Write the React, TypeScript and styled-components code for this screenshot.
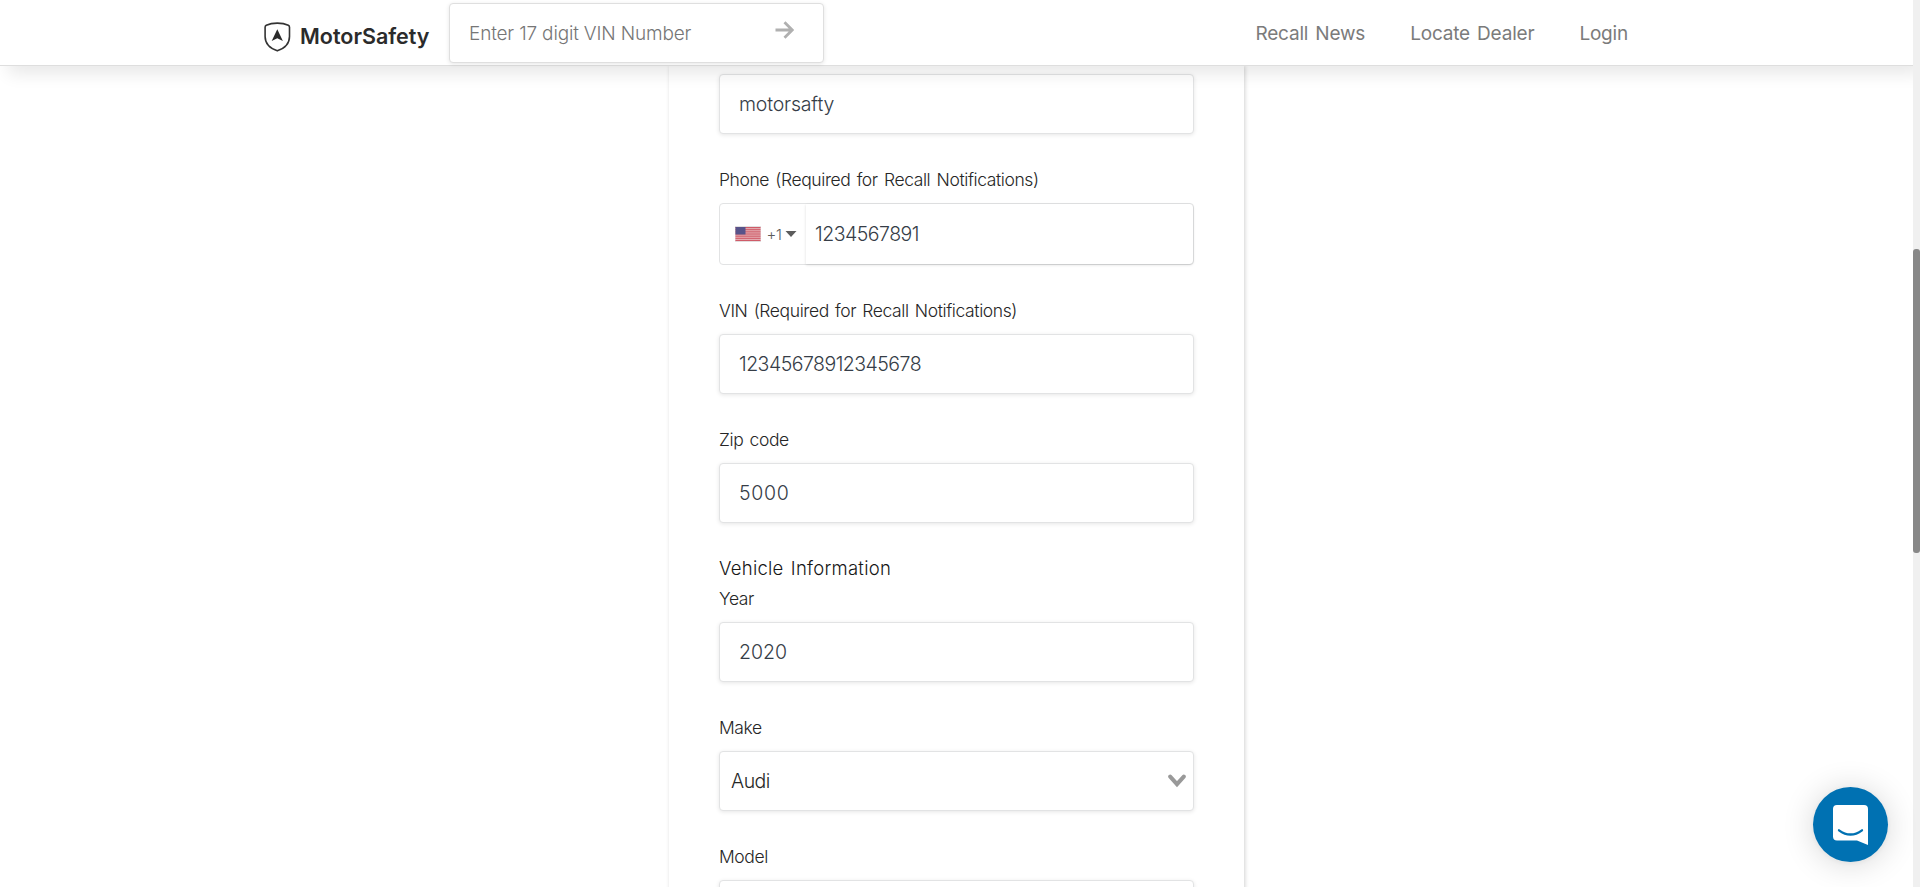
import React from 'react';
import styled, { createGlobalStyle } from 'styled-components';

const GlobalStyle = createGlobalStyle`
  *, *::before, *::after { box-sizing: border-box; }
  body {
    margin: 0;
    background: #fff;
    color: #262626;
    font-family: Inter, 'Liberation Sans', sans-serif;
    font-weight: 300;
  }
`;

const Page = styled.div`
  display: flex;
  height: 887px;
  overflow: hidden;
`;

const Viewport = styled.div`
  flex: 1;
  min-width: 0;
  display: flex;
  flex-direction: column;
`;

const Header = styled.header`
  position: relative;
  z-index: 2;
  flex: none;
  display: flex;
  align-items: flex-start;
  height: 66px;
  padding: 3px 285px 0 264px;
  background: #fff;
  border-bottom: 1px solid #dedede;
  box-shadow: 8px 8px 16px rgba(0, 0, 0, 0.09);
`;

const Brand = styled.a`
  display: flex;
  align-items: center;
  width: 185px;
  height: 68px;
  color: #2b2b2b;
  text-decoration: none;
`;

const BrandName = styled.span`
  margin: 0 0 2px 9px;
  font-size: 21.5px;
  font-weight: 600;
  line-height: 28px;
`;

const SearchBox = styled.div`
  display: flex;
  align-items: center;
  justify-content: space-between;
  width: 375px;
  height: 60px;
  padding: 0 29px 0 19px;
  background: #fff;
  border: 1px solid #dfdfdf;
  border-radius: 4px;
  box-shadow: 0 1px 4px rgba(0, 0, 0, 0.1);
`;

const Placeholder = styled.span`
  color: #767676;
  font-size: 19px;
  letter-spacing: -0.17px;
  white-space: nowrap;
`;

const SearchArrow = styled.svg`
  margin-bottom: 6px;
`;

const Nav = styled.nav`
  display: flex;
  align-items: center;
  gap: 45px;
  height: 60px;
  margin-left: auto;
`;

const NavLink = styled.a`
  color: #7b7b7b;
  font-size: 19px;
  font-weight: 400;
  letter-spacing: -0.2px;
  word-spacing: 2px;
  white-space: nowrap;
`;

const Main = styled.main`
  flex: 1;
  min-height: 0;
  display: flex;
  justify-content: center;
  overflow: hidden;
`;

const Card = styled.form`
  flex: none;
  width: 575px;
  height: 960px;
  padding: 8px 50px 0;
  background: #fff;
  box-shadow: 1px 0 4px rgba(0, 0, 0, 0.18);
`;

const Field = styled.div`
  & + & { margin-top: 33px; }
`;

const Label = styled.label`
  display: block;
  margin-bottom: 10px;
  font-size: 17.5px;
  line-height: 26px;
  letter-spacing: -0.4px;
  word-spacing: 1.7px;
`;

const Box = styled.div`
  display: flex;
  align-items: center;
  justify-content: space-between;
  height: 60px;
  padding: 0 6.5px 0 19px;
  background: #fff;
  border: 1px solid #e2e3e4;
  border-radius: 4px;
  box-shadow: 0 1px 4px rgba(0, 0, 0, 0.1);
`;

const SelectBox = styled(Box)`
  padding-left: 11px;
`;

const Value = styled.span<{ $spacing?: number }>`
  color: #363d47;
  font-size: 19.5px;
  letter-spacing: ${({ $spacing = 0 }) => $spacing}px;
`;

const SelectValue = styled(Value)`
  color: #262626;
`;

const PhoneBox = styled.div`
  display: flex;
  height: 62px;
  border: 1px solid #e2e3e4;
  border-radius: 4px;
`;

const DialCode = styled.div`
  display: flex;
  align-items: center;
  width: 86px;
  padding-left: 14.5px;
`;

const Code = styled.span`
  margin: 0 3px 0 6px;
  color: #5c5c5c;
  font-size: 15px;
  letter-spacing: -0.3px;
`;

const PhoneNumber = styled.div`
  flex: 1;
  display: flex;
  align-items: center;
  padding-left: 9px;
  border-radius: 0 4px 4px 0;
  box-shadow: 0 1px 3px rgba(0, 0, 0, 0.14);
`;

const SectionTitle = styled.h2`
  margin: 33px 0 6px;
  color: #161616;
  font-size: 18.5px;
  font-weight: 300;
  line-height: 24px;
  letter-spacing: 0.25px;
  word-spacing: 1.8px;
`;

const ScrollTrack = styled.div`
  position: relative;
  z-index: 3;
  flex: none;
  width: 7px;
  padding-top: 249px;
  background: #f0f0f0;
`;

const ScrollThumb = styled.div`
  height: 304px;
  background: #888;
  border-radius: 3px;
`;

const Launcher = styled.button`
  position: fixed;
  z-index: 4;
  left: 1813px;
  top: 787px;
  width: 75px;
  height: 75px;
  padding: 0;
  border: 0;
  border-radius: 50%;
  background: #0071b2;
  box-shadow: 0 1px 6px rgba(0, 0, 0, 0.06), 0 2px 32px rgba(0, 0, 0, 0.16);
`;

const LauncherIcon = styled.svg`
  display: block;
`;

function Shield() {
  return (
    <svg width="27" height="30" viewBox="0 0 27 30" fill="none">
      <path
        d="M13.3 1.1C9.3 1.1 5.3 1.8 2.3 3.2Q1.1 3.8 1.1 5.2V14.5C1.1 21.5 6 26.3 13.3 28.8C20.6 26.3 25.5 21.5 25.5 14.5V5.2Q25.5 3.8 24.3 3.2C21.3 1.8 17.3 1.1 13.3 1.1Z"
        stroke="#333"
        strokeWidth="1.6"
      />
      <path d="M13.3 7.2L18.9 19L13.3 16.2L7.7 19Z" fill="#2b2b2b" />
    </svg>
  );
}

function Flag() {
  const stripes = [0, 2, 4, 6, 8, 10, 12];
  return (
    <svg width="26" height="16" viewBox="0 0 26 16">
      <rect width="26" height="16" fill="#e3e1e2" />
      <g transform="translate(.5 1)">
        <rect width="25" height="14" fill="#e5b0b5" />
        {stripes.map((y) => (
          <rect key={y} y={y * 1.077} width="25" height="1.1" fill="#cf5b68" />
        ))}
        <rect width="10" height="7.5" fill="#57538a" />
      </g>
    </svg>
  );
}

type TextFieldProps = { label?: string; value?: string; spacing?: number };

function TextField({ label, value, spacing }: TextFieldProps) {
  return (
    <Field>
      {label && <Label>{label}</Label>}
      <Box>
        <Value $spacing={spacing}>{value}</Value>
      </Box>
    </Field>
  );
}

export default function App() {
  return (
    <Page>
      <GlobalStyle />
      <Viewport>
        <Header>
          <Brand>
            <Shield />
            <BrandName>MotorSafety</BrandName>
          </Brand>
          <SearchBox>
            <Placeholder>Enter 17 digit VIN Number</Placeholder>
            <SearchArrow width="19" height="18" viewBox="0 0 19 18" fill="none" stroke="#b0b0b0" strokeWidth="2.8">
              <path d="M0.5 9H17M9.5 1.2L17.2 9L9.5 16.8" />
            </SearchArrow>
          </SearchBox>
          <Nav>
            <NavLink>Recall News</NavLink>
            <NavLink>Locate Dealer</NavLink>
            <NavLink>Login</NavLink>
          </Nav>
        </Header>
        <Main>
          <Card>
            <TextField value="motorsafty" spacing={-0.18} />
            <Field>
              <Label>Phone (Required for Recall Notifications)</Label>
              <PhoneBox>
                <DialCode>
                  <Flag />
                  <Code>+1</Code>
                  <svg width="12" height="6" viewBox="0 0 12 6">
                    <path d="M0.5 0H11.5L6 6Z" fill="#5c5c5c" />
                  </svg>
                </DialCode>
                <PhoneNumber>
                  <Value $spacing={-0.5}>1234567891</Value>
                </PhoneNumber>
              </PhoneBox>
            </Field>
            <TextField label="VIN (Required for Recall Notifications)" value="12345678912345678" spacing={-0.52} />
            <TextField label="Zip code" value="5000" spacing={0.7} />
            <SectionTitle>Vehicle Information</SectionTitle>
            <TextField label="Year" value="2020" spacing={0} />
            <Field>
              <Label>Make</Label>
              <SelectBox>
                <SelectValue $spacing={-0.5}>Audi</SelectValue>
                <svg width="20" height="14" viewBox="0 0 20 14" fill="none" stroke="#999" strokeWidth="4" strokeLinecap="round">
                  <path d="M3.2 2.6L10 10.2L16.8 2.6" />
                </svg>
              </SelectBox>
            </Field>
            <TextField label="Model" />
          </Card>
        </Main>
      </Viewport>
      <ScrollTrack>
        <ScrollThumb />
      </ScrollTrack>
      <Launcher>
        <LauncherIcon width="75" height="75" viewBox="0 0 75 75" fill="none">
          <path d="M24 18H51Q55 18 55 22V58L44 53.6H24Q20 53.6 20 49.6V22Q20 18 24 18Z" fill="#fff" />
          <path d="M26 43.3Q37.5 51.8 49 43.3" stroke="#0071b2" strokeWidth="2.3" strokeLinecap="round" />
        </LauncherIcon>
      </Launcher>
    </Page>
  );
}
